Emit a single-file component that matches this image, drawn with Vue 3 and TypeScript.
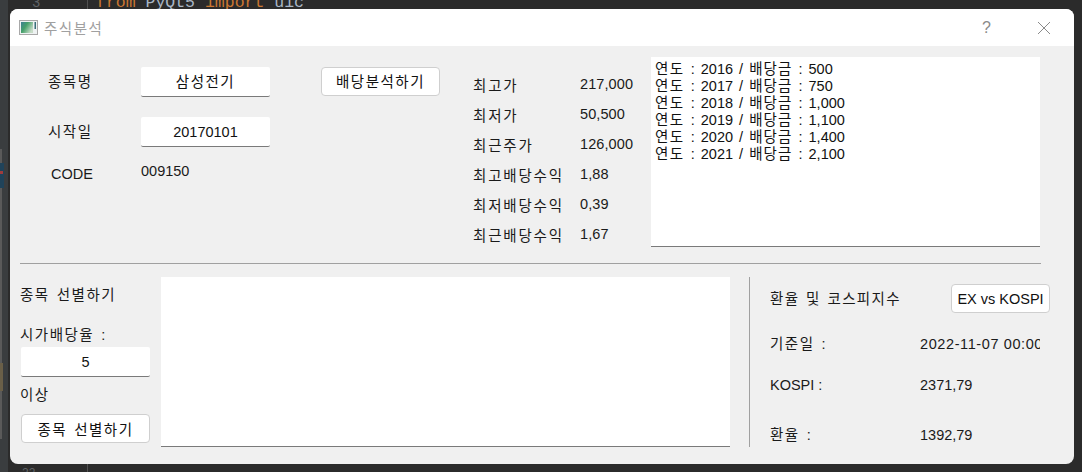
<script setup lang="ts">
const stats: [string, string][] = [
  ['최고가', '217,000'],
  ['최저가', '50,500'],
  ['최근주가', '126,000'],
  ['최고배당수익', '1,88'],
  ['최저배당수익', '0,39'],
  ['최근배당수익', '1,67'],
]
const dividends: [number, string][] = [
  [2016, '500'],
  [2017, '750'],
  [2018, '1,000'],
  [2019, '1,100'],
  [2020, '1,400'],
  [2021, '2,100'],
]
</script>

<template>
  <div class="desk">
    <div class="code-peek">
      <span class="line-no">3</span>
      <span class="code"><span class="kw">from</span> PyQt5 <span class="kw">import</span> uic</span>
    </div>
    <div class="side-strip">
      <i class="rail"></i>
      <i class="mark mark-blue"><b class="mark-red"></b></i>
      <i class="mark mark-brown"></i>
    </div>
    <div class="gutter"></div>
    <span class="line-bottom">22</span>

    <div class="window">
      <header class="titlebar">
        <svg class="app-icon" width="19" height="15" viewBox="0 0 19 15">
          <defs>
            <linearGradient id="g" x1="0" y1="0" x2="1" y2="0.6">
              <stop offset="0" stop-color="#3f7f94" />
              <stop offset="0.45" stop-color="#45a06a" />
              <stop offset="1" stop-color="#c8dcc8" />
            </linearGradient>
          </defs>
          <rect x="0.5" y="0.5" width="18" height="14" fill="#eef2f2" stroke="#a8a8a8" />
          <rect x="2" y="2" width="12" height="11" fill="url(#g)" />
          <rect x="15.5" y="2" width="1.5" height="7" fill="#3a6f7a" />
        </svg>
        <span class="title ko">주식분석</span>
        <span class="help">?</span>
        <svg class="close" width="14" height="14" viewBox="0 0 14 14">
          <path d="M1 1 L13 13 M13 1 L1 13" stroke="#8a8a8a" stroke-width="1" fill="none" />
        </svg>
      </header>

      <main class="body">
        <section class="top">
          <div class="form">
            <div class="form-row">
              <span class="form-label ko">종목명</span>
              <div class="field"><span class="ko up">삼성전기</span></div>
            </div>
            <div class="form-row">
              <span class="form-label ko">시작일</span>
              <div class="field">20170101</div>
            </div>
            <div class="form-row code-row">
              <span class="form-label code-label">CODE</span>
              <span class="code-value">009150</span>
            </div>
          </div>
          <button class="btn analyze"><span class="ko up">배당분석하기</span></button>
          <div class="stats">
            <div v-for="s in stats" :key="s[0]" class="stat">
              <span class="stat-label ko">{{ s[0] }}</span>
              <span class="stat-value">{{ s[1] }}</span>
            </div>
          </div>
          <div class="textbox dividends">
            <div v-for="d in dividends" :key="d[0]" class="div-line"><span class="ko">연도</span> : {{ d[0] }} / <span class="ko tight">배당금</span> : {{ d[1] }}</div>
          </div>
        </section>

        <div class="hr"></div>

        <section class="bottom">
          <div class="picker">
            <div class="picker-title ko">종목 선별하기</div>
            <div class="picker-label ko">시가배당율 :</div>
            <div class="field wide">5</div>
            <div class="picker-above ko">이상</div>
            <button class="btn pick"><span class="ko">종목 선별하기</span></button>
          </div>
          <div class="textbox results"></div>
          <div class="vr"></div>
          <div class="market">
            <div class="market-head">
              <span class="ko head-label">환율 및 코스피지수</span>
              <button class="btn ex">EX vs KOSPI</button>
            </div>
            <div class="market-row r1"><span class="m-label ko">기준일 :</span><span class="m-value clip">2022-11-07 00:00:00</span></div>
            <div class="market-row r2"><span class="m-label">KOSPI :</span><span class="m-value">2371,79</span></div>
            <div class="market-row r3"><span class="m-label ko">환율 :</span><span class="m-value">1392,79</span></div>
          </div>
        </section>
      </main>
    </div>
  </div>
</template>

<style>
html, body { margin: 0; background: #2b2b2b; overflow: hidden; }
</style>

<style scoped>
.desk {
  position: relative;
  width: 1082px;
  height: 472px;
  background: #2b2b2b;
  overflow: hidden;
  padding: 9px 8px 8px 10px;
  box-sizing: border-box;
  font-family: "Liberation Sans", "Noto Sans CJK KR", sans-serif;
  font-size: 14.5px;
  color: #1a1a1a;
}
.ko { letter-spacing: 1.5px; word-spacing: 1.5px; }
.tight { letter-spacing: 1.1px; }
.up { position: relative; top: -1px; }
.code-peek {
  position: absolute;
  top: -6px;
  left: 0;
  font-family: "Liberation Mono", monospace;
  font-size: 16.5px;
  line-height: 18px;
  color: #a9b7c6;
  white-space: pre;
}
.line-no { position: absolute; left: 32px; top: 0; color: #606366; font-size: 14px; }
.code { position: absolute; left: 96px; top: 0; }
.kw { color: #cc7832; }
.side-strip { position: absolute; left: 0; top: 0; width: 8px; height: 472px; background: #3a3d3f; }
.rail { position: absolute; left: 0; top: 149px; width: 2px; height: 290px; background: #5a5a5a; display: block; }
.mark { position: absolute; left: 0; display: block; }
.mark-blue { top: 163px; width: 4px; height: 25px; background: #20435a; }
.mark-red { position: absolute; left: 0; top: 8px; width: 3px; height: 3px; background: #a03c3c; display: block; }
.mark-brown { top: 363px; width: 3px; height: 28px; background: #6a5f48; }
.gutter { position: absolute; left: 87px; top: 0; width: 1px; height: 472px; background: #505050; }
.line-bottom { position: absolute; left: 22px; top: 466px; color: #606366; font-size: 12px; }

.window {
  position: relative;
  width: 1064px;
  height: 455px;
  background: #f0f0f0;
  border-radius: 8px;
  overflow: hidden;
  display: flex;
  flex-direction: column;
}
.titlebar {
  height: 37px;
  flex: none;
  background: #fff;
  display: flex;
  align-items: center;
  padding: 0 23px 0 9px;
}
.app-icon { margin-right: 6px; }
.title { color: #a0a0a0; font-size: 14.5px; flex: 1; }
.help { color: #8a8a8a; font-size: 16px; margin-right: 46px; }

.body { flex: 1; display: flex; flex-direction: column; min-height: 0; }

.top { height: 217px; flex: none; display: flex; align-items: flex-start; }
.form { width: 311px; padding-top: 21px; flex: none; }
.form-row { display: flex; height: 30px; align-items: center; margin-bottom: 20px; }
.form-label { width: 131px; padding-left: 38px; box-sizing: border-box; margin-top: -4px; flex: none; }
.code-row { margin-top: -9px; }
.code-label { padding-left: 41px; margin-top: 1px; letter-spacing: 0; }
.code-value { margin-top: -4px; }
.field {
  width: 129px;
  height: 30px;
  box-sizing: border-box;
  background: #fff;
  border-bottom: 1px solid #7a7a7a;
  border-radius: 2px;
  display: flex;
  align-items: center;
  justify-content: center;
  color: #111;
}
.btn {
  font: inherit;
  color: #111;
  background: #fff;
  border: 1px solid #cfcfcf;
  border-radius: 4px;
  padding: 0;
  box-sizing: border-box;
}
.analyze { width: 119px; height: 29px; margin-top: 21px; flex: none; }
.stats { width: 178px; margin-left: 33px; padding-top: 24px; flex: none; }
.stat { display: flex; height: 29.95px; align-items: center; }
.stat-label { width: 107px; flex: none; letter-spacing: 1.8px; }
.stat-value { margin-top: -2px; letter-spacing: 0.1px; }
.textbox {
  background: #fff;
  border-bottom: 1px solid #7a7a7a;
  box-sizing: border-box;
  flex: none;
}
.dividends {
  width: 389px;
  height: 190px;
  margin-top: 11px;
  padding: 4px 4px;
  font-size: 14.5px;
  line-height: 17px;
  color: #111;
}
.div-line { word-spacing: 2px; }

.hr { height: 1px; margin: 0 33px 0 10px; background: #a0a0a0; flex: none; }

.bottom { flex: 1; display: flex; align-items: flex-start; padding-top: 13px; }
.picker { flex: none; padding-left: 11px; width: 129px; margin-right: 11px; }
.picker-title { height: 18px; line-height: 18px; margin-top: 9px; margin-left: -1px; }
.picker-label { height: 18px; line-height: 18px; margin-top: 22px; margin-left: -1px; }
.picker .wide { margin-top: 3px; }
.picker-above { height: 18px; line-height: 18px; margin-top: 9px; margin-left: -1px; }
.pick { width: 129px; height: 29px; margin-top: 10px; display: block; }
.results { width: 569px; height: 170px; }
.vr { width: 1px; height: 170px; background: #a0a0a0; margin-left: 19px; flex: none; }
.market { flex: 1; padding-left: 20px; padding-right: 24px; }
.market-head { display: flex; align-items: center; justify-content: space-between; height: 29px; margin-top: 7px; }
.market-head .head-label { margin-top: -2px; letter-spacing: 1.3px; }
.ex { width: 99px; height: 29px; white-space: nowrap; flex: none; }
.market-row { display: flex; height: 18px; line-height: 18px; }
.m-label { width: 150px; flex: none; }
.m-value { width: 120px; overflow: hidden; white-space: nowrap; }
.clip { letter-spacing: 0.6px; }
.r1 { margin-top: 22px; }
.r2 { margin-top: 23px; }
.r3 { margin-top: 32px; }
</style>
